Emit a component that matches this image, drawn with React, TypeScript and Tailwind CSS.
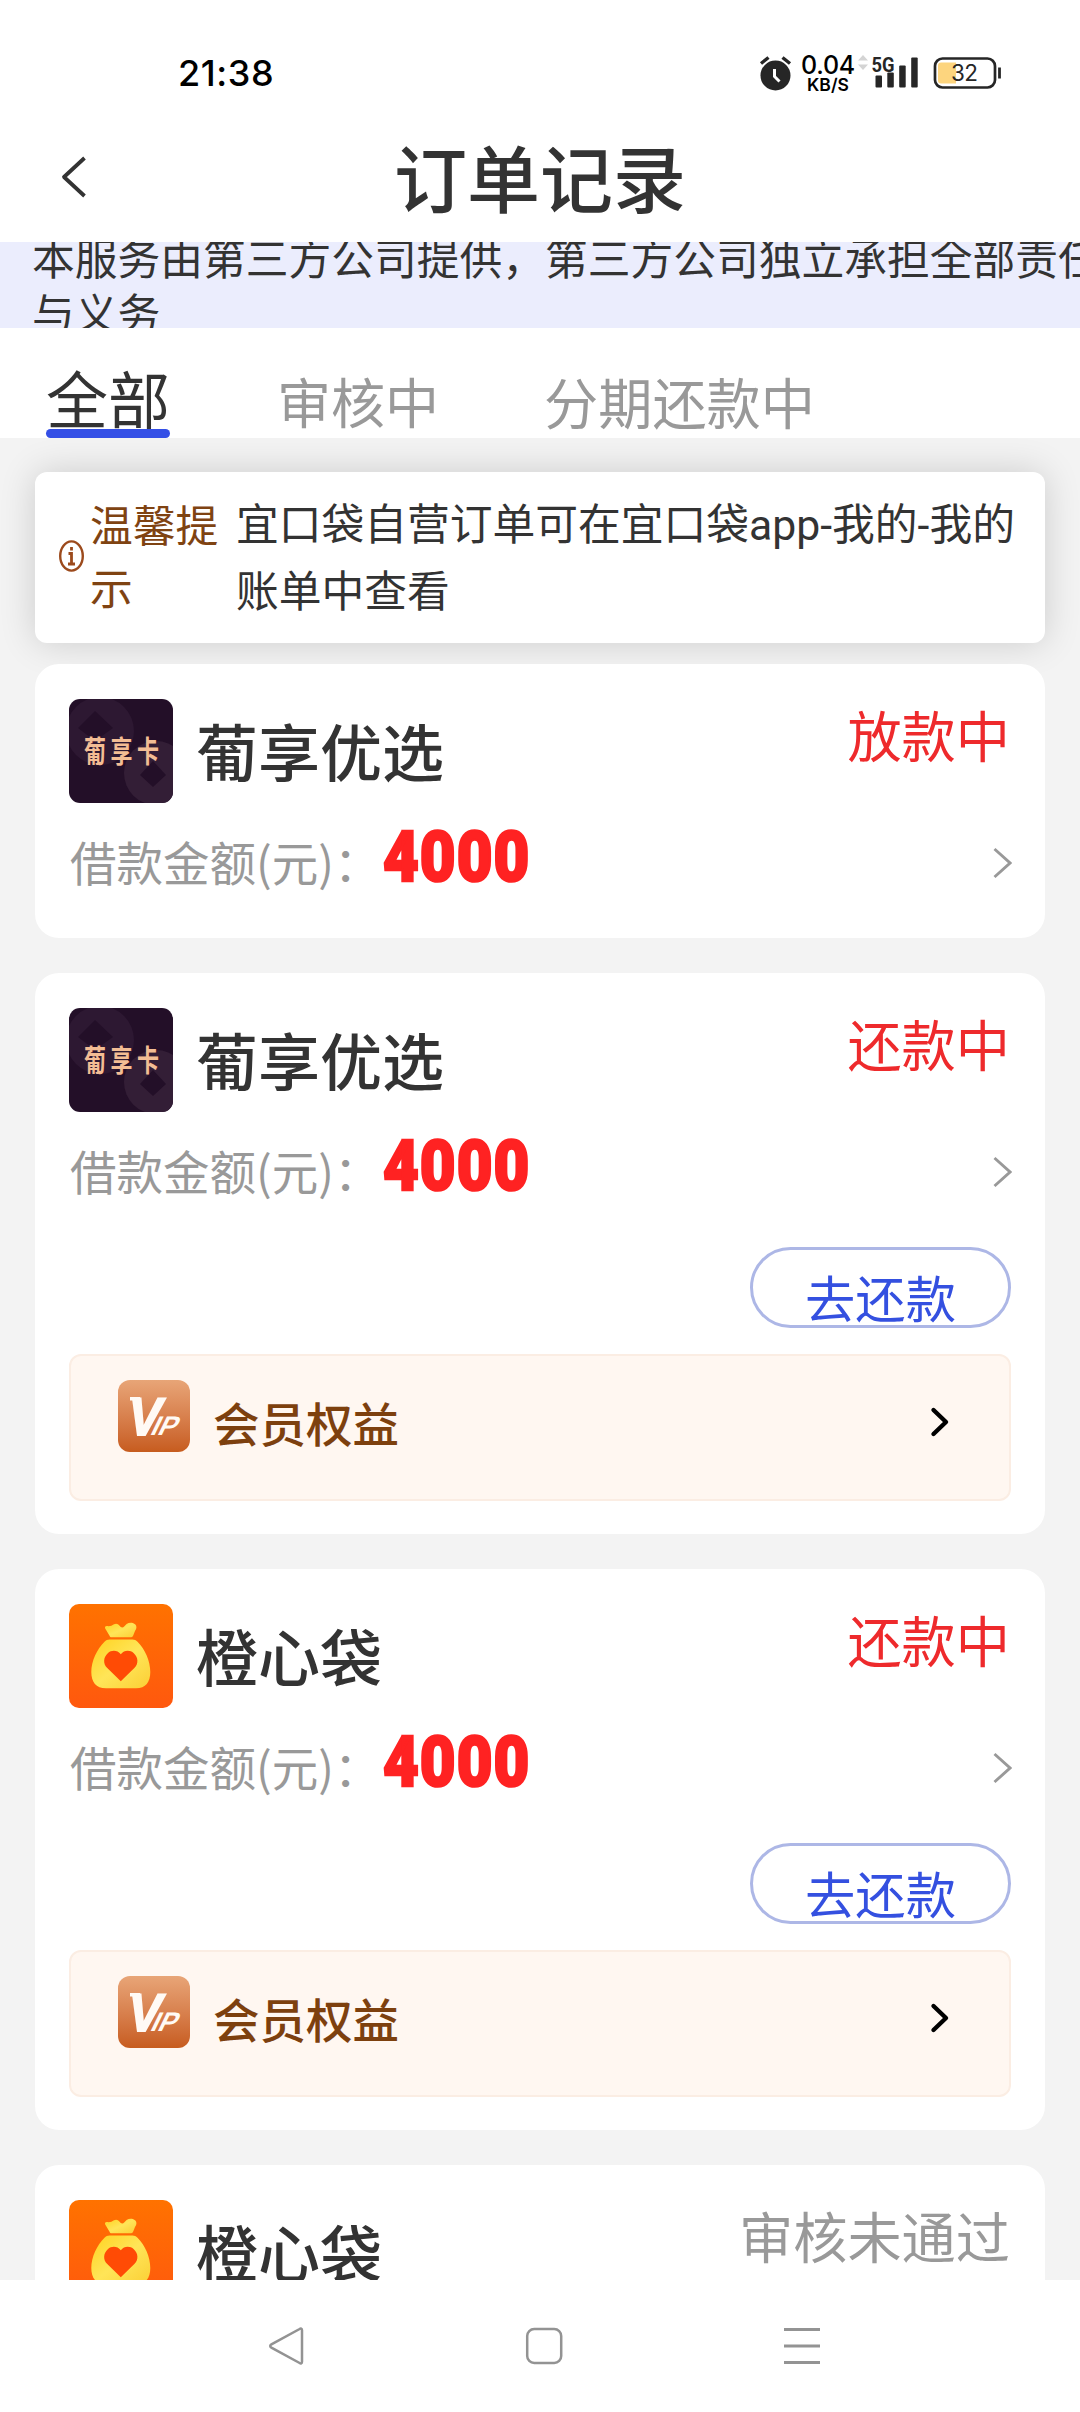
import { useId } from 'react';

type Brand = 'puxiang' | 'chengxin';

interface Order {
  id: number;
  brand: Brand;
  name: string;
  amount: string;
  status: string;
  statusClass: string;
  repayable?: boolean;
}

const ORDERS: Order[] = [
  { id: 1, brand: 'puxiang', name: '葡享优选', amount: '4000', status: '放款中', statusClass: 'text-[#ee2a2c]' },
  { id: 2, brand: 'puxiang', name: '葡享优选', amount: '4000', status: '还款中', statusClass: 'text-[#ee2a2c]', repayable: true },
  { id: 3, brand: 'chengxin', name: '橙心袋', amount: '4000', status: '还款中', statusClass: 'text-[#ee2a2c]', repayable: true },
  { id: 4, brand: 'chengxin', name: '橙心袋', amount: '4000', status: '审核未通过', statusClass: 'text-[#999]' },
];

function StatusBar() {
  return (
    <div className="flex h-[108px] shrink-0 items-center pt-[38px] pl-[178px] font-['Inter',sans-serif]">
      <span className="w-[580px] shrink-0 text-[36px] font-medium tracking-[0.6px] text-black">21:38</span>
      <svg className="mr-[9px] h-[36px] w-[34px] shrink-0" viewBox="0 0 34 36" fill="none">
        <circle cx="17.5" cy="20.5" r="15" fill="#262626" />
        <path d="M3 8.500l7.500-6M32 8.500l-7.500-6" stroke="#262626" strokeWidth="3.400" />
        <path d="M16.500 14v7.500l5 5" stroke="#fff" strokeWidth="3" />
      </svg>
      <div className="flex w-[54px] shrink-0 flex-col items-center font-medium text-black">
        <span className="text-[25px] leading-[20px] tracking-[-0.2px]">0.04</span>
        <span className="mt-[2px] text-[17.5px] leading-[15px] font-semibold">KB/S</span>
      </div>
      <svg className="-mt-[20px] ml-[2px] h-[18px] w-[12px] shrink-0" viewBox="0 0 12 18" fill="#d4d4d4">
        <path d="M1 6.500L6 1l5 5.500zM1 10.500L6 16l5-5.500z" />
      </svg>
      <svg className="ml-[3px] h-[34px] w-[46px] shrink-0" viewBox="0 0 46 34" fill="#262626">
        <text x="-0.500" y="15.500" fontFamily="Roboto, sans-serif" fontSize="20" fontWeight="700" textLength="23" lengthAdjust="spacingAndGlyphs">5G</text>
        <rect x="3.500" y="19.500" width="6.500" height="12" rx="1" />
        <rect x="15.300" y="16.500" width="6.500" height="15" rx="1" />
        <rect x="27.200" y="9.500" width="6.500" height="22" rx="1" />
        <rect x="39.200" y="1.500" width="6.500" height="30" rx="1" />
      </svg>
      <svg className="ml-[15px] h-[34px] w-[70px] shrink-0" viewBox="0 0 70 34" fill="none">
        <rect x="2" y="2.500" width="60" height="29" rx="7.500" stroke="#262626" strokeWidth="2.700" />
        <path d="M8 6.500h15v21H8a3 3 0 0 1-3-3v-15a3 3 0 0 1 3-3z" fill="#fdd57e" />
        <path d="M66.500 11.500v11" stroke="#262626" strokeWidth="2.800" />
        <text x="18" y="25" fontFamily="Inter, sans-serif" fontSize="22.500" fill="#262626" textLength="27">32</text>
      </svg>
    </div>
  );
}

function Header() {
  return (
    <div className="grid h-[134px] shrink-0 grid-cols-[100px_1fr_100px] items-center">
      <svg className="mt-[4px] ml-[60px] h-[44px] w-[28px]" viewBox="0 0 28 44" fill="none">
        <path d="M24.500 3L4 22l20.500 19" stroke="#333" strokeWidth="3.800" strokeLinejoin="round" />
      </svg>
      <h1 className="text-center text-[73px] leading-[100px] font-medium text-[#333]">订单记录</h1>
    </div>
  );
}

function Banner() {
  return (
    <div className="h-[86px] shrink-0 overflow-hidden bg-[#ebedfd] pl-[32px]">
      <p className="-mt-[13px] text-[42.75px] leading-[55px] whitespace-nowrap text-[#333]">
        本服务由第三方公司提供，第三方公司独立承担全部责任
        <br />
        与义务
      </p>
    </div>
  );
}

function Tabs() {
  return (
    <div className="flex h-[110px] shrink-0 items-end pl-[46px]">
      <div className="flex flex-col items-center text-[62px] leading-[64px] text-[#333]">
        全部
        <span className="h-[9px] w-full rounded-full bg-[#344fe6]" />
      </div>
      <span className="mb-[5px] ml-[107px] text-[54px] leading-[64px] text-[#999]">审核中</span>
      <span className="mb-[5px] ml-[105px] text-[54.2px] leading-[64px] text-[#999]">分期还款中</span>
    </div>
  );
}

function Notice() {
  return (
    <div className="mx-[35px] flex h-[171px] shrink-0 items-center rounded-[12px] bg-white pl-[24px] text-[42.75px] leading-[62.5px] shadow-[0_0_36px_rgba(0,0,0,0.16)]">
      <svg className="-mt-[3px] h-[32px] w-[25px] shrink-0" viewBox="0 0 25 32" fill="none" stroke="#9c4a1c">
        <ellipse cx="12.500" cy="16" rx="11.300" ry="14.600" strokeWidth="2.400" />
        <path d="M12.500 7v3.500M9.500 13.500h3v10.500M9 24h7" strokeWidth="2.800" />
      </svg>
      <p className="-mt-[6px] ml-[6px] w-[131px] shrink-0 text-[#7f4312]">温馨提示</p>
      <p className="-mt-[6px] ml-[15px] whitespace-nowrap text-[#333]">
        宜口袋自营订单可在宜口袋<span className="font-['Roboto',sans-serif]">app-</span>我的
        <span className="font-['Roboto',sans-serif]">-</span>我的
        <br />
        账单中查看
      </p>
    </div>
  );
}

function PuxiangLogo() {
  return (
    <svg className="h-[104px] w-[104px] shrink-0 rounded-[11px] bg-[#230f28]" viewBox="0 0 104 104">
      <circle cx="31" cy="32" r="34" fill="#2d1832" />
      <path d="M26 12L44 29 26 42 9 29z" fill="#230f28" />
      <circle cx="87" cy="74" r="32" fill="#331e36" />
      <path d="M84 62l13 14-13 12-13-12z" fill="#230f28" />
      <g transform="translate(0 62.500) scale(1 1.350)" fill="#f3bd94" fontSize="22" fontWeight="700">
        <text x="15">葡</text>
        <text x="41.500">享</text>
        <text x="68">卡</text>
      </g>
    </svg>
  );
}

function ChengxinLogo() {
  const id = useId();
  return (
    <svg className="h-[104px] w-[104px] shrink-0 rounded-[10px]" viewBox="0 0 104 104">
      <defs>
        <linearGradient id={`${id}bg`} x1="0" y1="0" x2="0" y2="1">
          <stop offset="0" stopColor="#ff7200" />
          <stop offset="1" stopColor="#ff580e" />
        </linearGradient>
        <linearGradient id={`${id}bag`} x1="0" y1="0" x2="1" y2="1">
          <stop offset="0" stopColor="#ffd21f" />
          <stop offset="0.500" stopColor="#ffe558" />
          <stop offset="1" stopColor="#fbcf35" />
        </linearGradient>
      </defs>
      <rect width="104" height="104" fill={`url(#${id}bg)`} />
      <path
        d="M36.200 24.500c-.8-1.600.4-2.800 2-2.400 3 .4 4.600-.6 6.800-1.900 2.400-1.200 4.200-.2 5.600 1.600 1.600 2.200 3.200 2.200 4.800.4l2.200-2.200c3.600-2.400 9.800-1 9.800 3.200 0 1.400-.6 2.400-1.200 3.400l-2 5c-.5 1.200-1 1.600-2 1.600H42.500c-1 0-1.400-.3-1.800-1.300z"
        fill={`url(#${id}bag)`}
      />
      <path
        d="M40.500 35.500h23c2 0 3.500.7 5 2.200C76 45 81.300 57 81.300 68c0 10-4.500 16.300-14.300 16.300H37C27 84.300 22.300 78 22.300 68 22.300 57 28 45 35.500 37.700c1.500-1.500 3-2.200 5-2.200z"
        fill={`url(#${id}bag)`}
      />
      <path
        d="M51.800 50.200c3.400-4.200 9.200-4.400 13-1 4.600 4.200 4.800 10.400.8 14.600L51.800 77.200 38 63.800c-4-4.200-3.800-10.400.8-14.600 3.800-3.400 9.600-3.200 13 1z"
        fill="#ff4b05"
      />
    </svg>
  );
}

function VipIcon() {
  return (
    <div className="flex h-[72px] w-[72px] shrink-0 rounded-[12px] bg-linear-to-b from-[#e8a577] to-[#c75c1e]">
      <svg className="h-full w-full" viewBox="0 0 72 72" fill="#fffaf5" fontFamily="Liberation Sans, sans-serif" fontWeight="700">
        <path d="M12 17h10v3.500H12z" />
        <g transform="translate(7 54.500) skewX(-12)">
          <text x="0" y="0" fontSize="53" textLength="33" lengthAdjust="spacingAndGlyphs" stroke="#fffaf5" strokeWidth="2">V</text>
        </g>
        <g transform="translate(31 55) skewX(-26)">
          <text x="0" y="0" fontSize="27" textLength="25" lengthAdjust="spacingAndGlyphs">IP</text>
        </g>
      </svg>
    </div>
  );
}

function OrderCard({ order }: { order: Order }) {
  return (
    <div className="shrink-0 rounded-[24px] bg-white px-[34px] pt-[35px]">
      <div className="flex h-[104px]">
        {order.brand === 'puxiang' ? <PuxiangLogo /> : <ChengxinLogo />}
        <h2 className="ml-[23px] text-[62px] leading-[102px] font-medium text-[#333]">{order.name}</h2>
        <span className={`mr-px ml-auto text-[54.2px] leading-[70px] ${order.statusClass}`}>{order.status}</span>
      </div>
      <div className="flex h-[120px] items-center">
        <span className="-mt-[5px] w-[314px] pl-px text-[46.5px] whitespace-nowrap text-[#999]">借款金额(元)：</span>
        <span className="-mt-[12px] origin-left scale-x-[0.87] font-['Roboto',sans-serif] text-[71px] leading-[80px] font-black tracking-[1.2px] text-[#ff2222] [-webkit-text-stroke:2.5px_#ff2222]">
          {order.amount}
        </span>
        <svg className="-mr-px ml-auto h-[34px] w-[19px]" viewBox="0 0 19 34" fill="none">
          <path d="M1.500 3L17 17 1.500 31" stroke="#999" strokeWidth="2.900" />
        </svg>
      </div>
      {order.repayable ? (
        <div className="flex flex-col pt-[15px] pb-[33.2px]">
          <button
            type="button"
            className="h-[81px] w-[261px] self-end overflow-hidden rounded-full border-[3px] border-[#adb7e6] pt-[2px] text-[50.3px] leading-[88px] text-[#3450e0]"
          >
            去还款
          </button>
          <div className="mt-[26px] flex h-[147px] items-start rounded-[12px] border-2 border-[#fbede3] bg-[#fff7f1] pt-[24px] pl-[47px]">
            <VipIcon />
            <span className="ml-[23px] pt-[6px] text-[46.5px] leading-[72px] font-medium text-[#7d400e]">会员权益</span>
            <svg className="mt-[26px] mr-[59px] ml-auto h-[32px] w-[20px]" viewBox="0 0 20 32" fill="none">
              <path d="M3.500 4L16 16 3.500 28" stroke="#000" strokeWidth="4.400" strokeLinecap="round" strokeLinejoin="round" />
            </svg>
          </div>
        </div>
      ) : (
        <div className="h-[15px]" />
      )}
    </div>
  );
}

function SystemNav() {
  return (
    <div className="flex h-[132px] shrink-0 items-center bg-white pl-[268px] text-[#939393]">
      <svg className="h-[40px] w-[38px]" viewBox="0 0 38 40" fill="none" stroke="currentColor" strokeWidth="2.500">
        <path d="M34 4.200v31.600c0 1.600-1.200 2-2.400 1.200L3.400 21.600c-1.600-1-1.600-2.200 0-3.200L31.600 3c1.200-.8 2.400-.4 2.400 1.200z" />
      </svg>
      <svg className="ml-[219px] h-[40px] w-[40px]" viewBox="0 0 40 40" fill="none" stroke="currentColor" strokeWidth="2.500">
        <rect x="2.200" y="3" width="34" height="34" rx="7" />
      </svg>
      <svg className="ml-[218px] h-[40px] w-[40px]" viewBox="0 0 40 40" fill="none" stroke="currentColor" strokeWidth="2.800">
        <path d="M1 3.500h36M1 20h36M1 36.500h36" />
      </svg>
    </div>
  );
}

export default function App() {
  return (
    <div className="flex h-[2412px] w-[1080px] flex-col overflow-hidden bg-white font-['Noto_Sans_CJK_SC',sans-serif]">
      <StatusBar />
      <Header />
      <Banner />
      <Tabs />
      <div className="flex min-h-0 flex-1 flex-col overflow-hidden bg-[#f3f3f3] pt-[34px]">
        <Notice />
        <div className="mx-[35px] mt-[21px] flex flex-col gap-[35px]">
          {ORDERS.map((order) => (
            <OrderCard key={order.id} order={order} />
          ))}
        </div>
      </div>
      <SystemNav />
    </div>
  );
}
